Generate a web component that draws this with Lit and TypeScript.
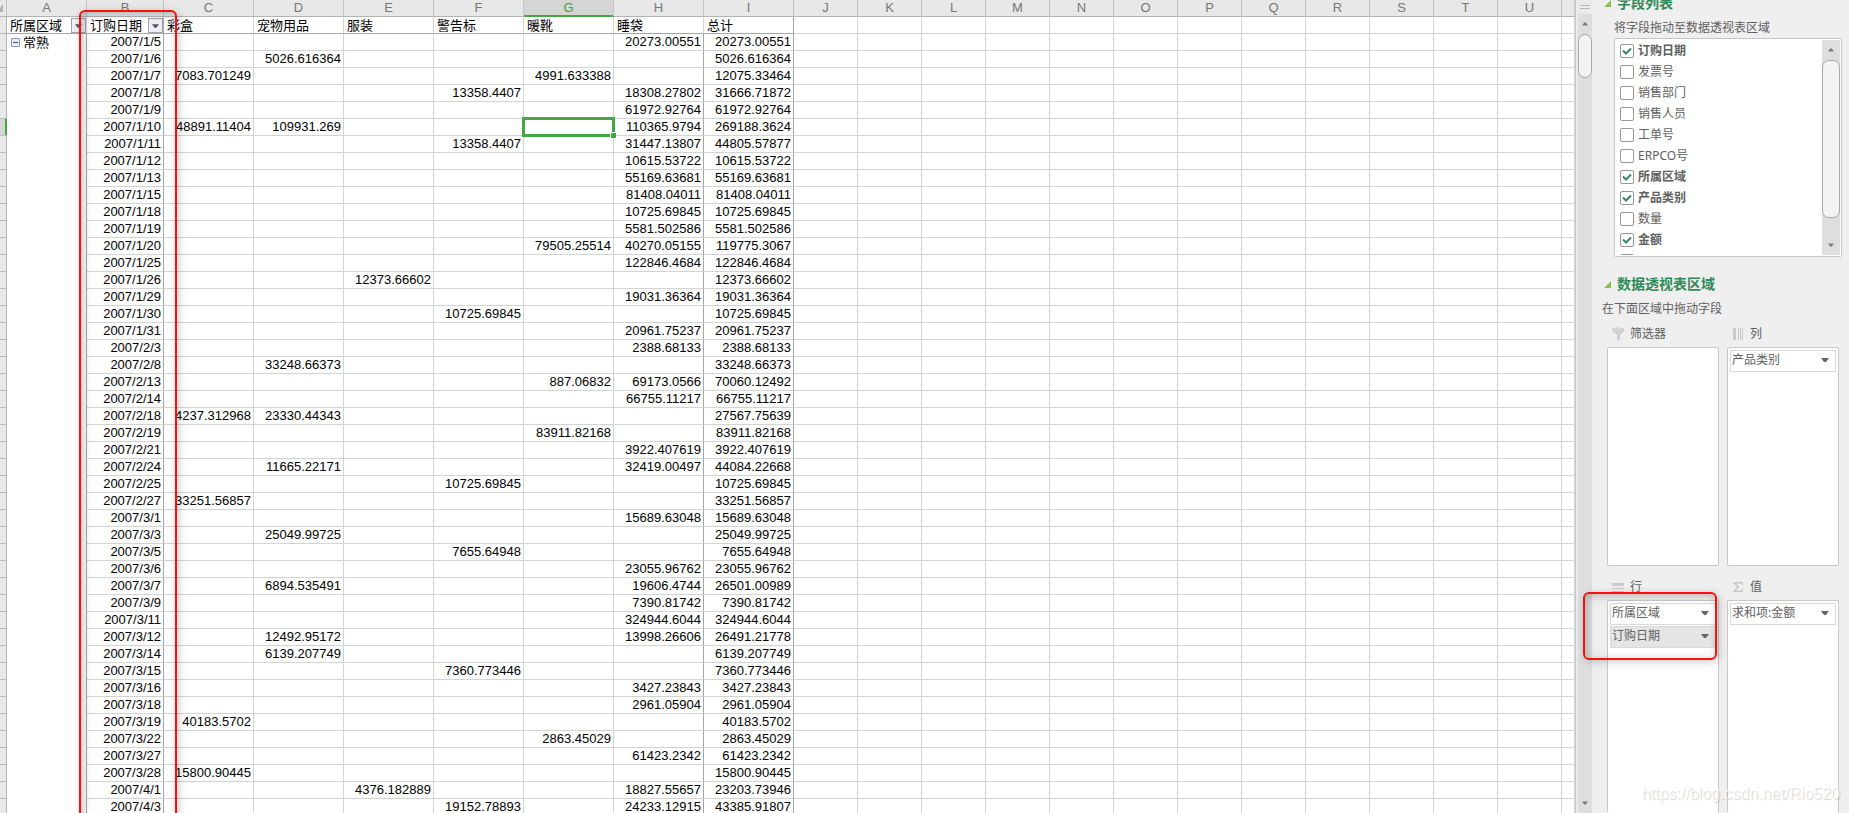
import { LitElement, html, css, svg, nothing } from "lit";
import { customElement } from "lit/decorators.js";
import { classMap } from "lit/directives/class-map.js";

type Values = { C?: string; D?: string; E?: string; F?: string; G?: string; H?: string };
type Row = [string, Values, string];

const ROWS: Row[] = [
  ["2007/1/5", { H: "20273.00551" }, "20273.00551"],
  ["2007/1/6", { D: "5026.616364" }, "5026.616364"],
  ["2007/1/7", { C: "7083.701249", G: "4991.633388" }, "12075.33464"],
  ["2007/1/8", { F: "13358.4407", H: "18308.27802" }, "31666.71872"],
  ["2007/1/9", { H: "61972.92764" }, "61972.92764"],
  ["2007/1/10", { C: "48891.11404", D: "109931.269", H: "110365.9794" }, "269188.3624"],
  ["2007/1/11", { F: "13358.4407", H: "31447.13807" }, "44805.57877"],
  ["2007/1/12", { H: "10615.53722" }, "10615.53722"],
  ["2007/1/13", { H: "55169.63681" }, "55169.63681"],
  ["2007/1/15", { H: "81408.04011" }, "81408.04011"],
  ["2007/1/18", { H: "10725.69845" }, "10725.69845"],
  ["2007/1/19", { H: "5581.502586" }, "5581.502586"],
  ["2007/1/20", { G: "79505.25514", H: "40270.05155" }, "119775.3067"],
  ["2007/1/25", { H: "122846.4684" }, "122846.4684"],
  ["2007/1/26", { E: "12373.66602" }, "12373.66602"],
  ["2007/1/29", { H: "19031.36364" }, "19031.36364"],
  ["2007/1/30", { F: "10725.69845" }, "10725.69845"],
  ["2007/1/31", { H: "20961.75237" }, "20961.75237"],
  ["2007/2/3", { H: "2388.68133" }, "2388.68133"],
  ["2007/2/8", { D: "33248.66373" }, "33248.66373"],
  ["2007/2/13", { G: "887.06832", H: "69173.0566" }, "70060.12492"],
  ["2007/2/14", { H: "66755.11217" }, "66755.11217"],
  ["2007/2/18", { C: "4237.312968", D: "23330.44343" }, "27567.75639"],
  ["2007/2/19", { G: "83911.82168" }, "83911.82168"],
  ["2007/2/21", { H: "3922.407619" }, "3922.407619"],
  ["2007/2/24", { D: "11665.22171", H: "32419.00497" }, "44084.22668"],
  ["2007/2/25", { F: "10725.69845" }, "10725.69845"],
  ["2007/2/27", { C: "33251.56857" }, "33251.56857"],
  ["2007/3/1", { H: "15689.63048" }, "15689.63048"],
  ["2007/3/3", { D: "25049.99725" }, "25049.99725"],
  ["2007/3/5", { F: "7655.64948" }, "7655.64948"],
  ["2007/3/6", { H: "23055.96762" }, "23055.96762"],
  ["2007/3/7", { D: "6894.535491", H: "19606.4744" }, "26501.00989"],
  ["2007/3/9", { H: "7390.81742" }, "7390.81742"],
  ["2007/3/11", { H: "324944.6044" }, "324944.6044"],
  ["2007/3/12", { D: "12492.95172", H: "13998.26606" }, "26491.21778"],
  ["2007/3/14", { D: "6139.207749" }, "6139.207749"],
  ["2007/3/15", { F: "7360.773446" }, "7360.773446"],
  ["2007/3/16", { H: "3427.23843" }, "3427.23843"],
  ["2007/3/18", { H: "2961.05904" }, "2961.05904"],
  ["2007/3/19", { C: "40183.5702" }, "40183.5702"],
  ["2007/3/22", { G: "2863.45029" }, "2863.45029"],
  ["2007/3/27", { H: "61423.2342" }, "61423.2342"],
  ["2007/3/28", { C: "15800.90445" }, "15800.90445"],
  ["2007/4/1", { E: "4376.182889", H: "18827.55657" }, "23203.73946"],
  ["2007/4/3", { F: "19152.78893", H: "24233.12915" }, "43385.91807"],
];

const CATEGORY_COLS = ["C", "D", "E", "F", "G", "H"] as const;
const CATEGORIES = ["彩盒", "宠物用品", "服装", "警告标", "暖靴", "睡袋"];
const EMPTY_COLS = [..."JKLMNOPQRSTU", ""];
const SELECTED = { row: "2007/1/10", col: "G" };

const FIELDS: [string, boolean][] = [
  ["订购日期", true],
  ["发票号", false],
  ["销售部门", false],
  ["销售人员", false],
  ["工单号", false],
  ["ERPCO号", false],
  ["所属区域", true],
  ["产品类别", true],
  ["数量", false],
  ["金额", true],
  ["", false],
];

const arrow = (cls: string, up = false) => html`<svg class=${cls} viewBox="0 0 8 4" aria-hidden="true">
  ${up ? svg`<path d="M0 4 L3 0 H5 L8 4Z" />` : svg`<path d="M0 0 H8 L5 4 H3Z" />`}
</svg>`;

@customElement("pivot-sheet")
export class PivotSheet extends LitElement {
  static styles = css`
    :host {
      display: block;
      overflow: hidden;
      background: #fff;
    }
    .grid {
      width: 100%;
      table-layout: fixed;
      border-collapse: separate;
      border-spacing: 0;
      font: 13px/16px "Liberation Sans", "Noto Sans CJK SC", sans-serif;
      color: #000;
    }
    .w-row { width: 7px; }
    .w-a { width: 80px; }
    .w-b { width: 77px; }
    .w-value { width: 90px; }
    .w-empty { width: 64px; }
    th, td {
      box-sizing: border-box;
      height: 17px;
      padding: 0 2px;
      border-right: 1px solid #d4d4d4;
      border-bottom: 1px solid #d4d4d4;
      font-weight: 400;
      text-align: right;
      white-space: nowrap;
    }
    .letter, .corner {
      padding: 0;
      text-align: center;
      color: #777;
      background: #e8e8e8;
      border-right-color: #c4c4c4;
      border-bottom-color: #b4b4b4;
    }
    .letter.active {
      color: #3fa33f;
      background: #d5d5d5;
      box-shadow: inset 0 -1px #43a843;
      border-bottom-color: #43a843;
    }
    .corner-mark {
      display: block;
      width: 4px;
      height: 8px;
      fill: #b4b4b4;
    }
    .row-head {
      padding: 0;
      background: #e8e8e8;
      border-right-color: #b4b4b4;
      border-bottom-color: #bcbcbc;
    }
    .row-head.active {
      background: #d5d5d5;
      box-shadow: inset -1px 0 #43a843;
      border-right-color: #43a843;
    }
    .title {
      padding: 2px 3px 0;
      line-height: 14px;
      text-align: left;
      border-bottom-color: #a6a6a6;
    }
    .title.blank { border-bottom-color: #d4d4d4; }
    .with-filter {
      display: flex;
      align-items: flex-start;
      justify-content: space-between;
    }
    .filter {
      display: grid;
      place-items: center;
      box-sizing: border-box;
      width: 15px;
      height: 15px;
      margin: -1px -3px 0 0;
      padding: 0;
      border: 1px solid #a3a3ad;
      background: #eeeff4;
    }
    .filter-arrow {
      width: 7px;
      height: 4px;
      fill: #55555c;
    }
    .region {
      padding: 1px 4px 0;
      vertical-align: top;
      border-bottom: 0;
    }
    .group {
      display: flex;
      align-items: center;
      gap: 3px;
    }
    .toggle {
      display: grid;
      place-items: center;
      box-sizing: border-box;
      width: 9px;
      height: 9px;
      margin: 0 0 2px;
      padding: 0;
      border: 1px solid #8796b0;
      border-radius: 1px;
      background: #e9edf5;
    }
    .minus {
      width: 5px;
      height: 1px;
      background: #35507c;
    }
    .edge { border-right-color: #a6a6a6; }
    .selected { position: relative; }
    .cursor {
      position: absolute;
      inset: -2px;
      border: 3px solid #43a843;
    }
    .handle {
      position: absolute;
      right: -4px;
      bottom: -4px;
      width: 5px;
      height: 5px;
      border: 1px solid #fff;
      border-right: 0;
      border-bottom: 0;
      background: #43a843;
    }
  `;

  private filter(label: string) {
    return html`<button class="filter" aria-label=${`筛选 ${label}`}>${arrow("filter-arrow")}</button>`;
  }

  render() {
    return html`
      <table class="grid">
        <colgroup>
          <col class="w-row" /><col class="w-a" /><col class="w-b" />
          ${[...CATEGORY_COLS, "I"].map(() => html`<col class="w-value" />`)}
          ${EMPTY_COLS.map((c) => html`<col class=${c ? "w-empty" : ""} />`)}
        </colgroup>
        <thead>
          <tr>
            <th class="corner"><svg class="corner-mark" viewBox="0 0 4 8" aria-hidden="true"><path d="M3 0V8H0V4Z" /></svg></th>
            ${["A", "B", ...CATEGORY_COLS, "I", ...EMPTY_COLS].map(
              (c) => html`<th class=${classMap({ letter: true, active: c === SELECTED.col })}>${c}</th>`
            )}
          </tr>
          <tr>
            <th class="row-head"></th>
            <th class="title"><div class="with-filter">所属区域${this.filter("所属区域")}</div></th>
            <th class="title edge"><div class="with-filter">订购日期${this.filter("订购日期")}</div></th>
            ${CATEGORIES.map((c) => html`<th class="title">${c}</th>`)}
            <th class="title edge">总计</th>
            ${EMPTY_COLS.map(() => html`<th class="title blank"></th>`)}
          </tr>
        </thead>
        <tbody>
          ${ROWS.map(([date, values, total], i) => html`
            <tr>
              <th class=${classMap({ "row-head": true, active: date === SELECTED.row })}></th>
              ${i === 0
                ? html`<td class="region edge" rowspan=${ROWS.length}>
                    <div class="group"><button class="toggle" aria-label="折叠 常熟"><span class="minus"></span></button>常熟</div>
                  </td>`
                : nothing}
              <td class="edge">${date}</td>
              ${CATEGORY_COLS.map((c) => {
                const selected = date === SELECTED.row && c === SELECTED.col;
                return html`<td class=${classMap({ edge: c === "H", selected })}>${values[c] ?? nothing}${selected
                  ? html`<div class="cursor"><div class="handle"></div></div>`
                  : nothing}</td>`;
              })}
              <td class="edge">${total}</td>
              ${EMPTY_COLS.map(() => html`<td></td>`)}
            </tr>
          `)}
        </tbody>
      </table>
    `;
  }
}

@customElement("scroll-track")
export class ScrollTrack extends LitElement {
  static styles = css`
    :host {
      display: flex;
      flex-direction: column;
      align-items: stretch;
      background: #dedede;
    }
    .step {
      display: grid;
      place-items: center;
      height: 20px;
      flex: none;
      padding: 0;
      border: 0;
      background: none;
    }
    .step-arrow {
      width: 6px;
      height: 4px;
      fill: #7a7a7a;
    }
    .thumb {
      box-sizing: border-box;
      height: var(--thumb, 44px);
      border: 1px solid #a9a9a9;
      border-radius: 7px;
      background: #f3f3f3;
    }
    .rest { flex: 1; }
  `;

  render() {
    return html`
      <button class="step" aria-label="向上滚动">${arrow("step-arrow", true)}</button>
      <div class="thumb"></div>
      <div class="rest"></div>
      <button class="step" aria-label="向下滚动">${arrow("step-arrow")}</button>
    `;
  }
}

const filterIcon = svg`<path d="M0 2C0 0 12 0 12 2V4L8 8V13L6 14L5 13V8L0 4Z" fill="#cfcfcf" /><path d="M2 3Q6 1 10 3" fill="none" stroke="#e6e6e6" />`;
const columnsIcon = svg`<path d="M1 1H4V13H1ZM6 1H7V13H6ZM8 1H9V13H8ZM10 1H11V13H10Z" fill="#cbcbcb" />`;
const rowsIcon = svg`<path d="M0 3H12V6H0ZM0 8H12V9H0ZM0 11H12V12H0Z" fill="#cbcbcb" />`;
const sumIcon = svg`<path d="M1 2H11V5H10L9 3.5H4L7.500 7L4 10.500H9L10 9H11V12H1V11L5 7L1 3Z" fill="#cbcbcb" />`;

@customElement("pivot-panel")
export class PivotPanel extends LitElement {
  static styles = css`
    :host {
      display: flex;
      flex-direction: column;
      box-sizing: border-box;
      overflow: hidden;
      background: #efefef;
      color: #606060;
      font: 12px/16px "Noto Sans", "Noto Sans CJK SC", sans-serif;
    }
    .heading {
      display: flex;
      align-items: center;
      gap: 6px;
      flex: none;
      height: 16px;
      margin: 0;
      padding-left: 12px;
      font-size: 14px;
      font-weight: 700;
      color: #2f8a59;
    }
    .heading.first { margin-top: -5px; }
    .heading.second { margin-top: 19px; }
    .mark {
      width: 7px;
      height: 7px;
      fill: #8cc152;
    }
    .hint {
      margin: 0;
      flex: none;
    }
    .hint.first { padding: 9px 0 2px 22px; }
    .hint.second { padding: 9px 0 0 10px; }
    .fields {
      display: flex;
      flex: none;
      box-sizing: border-box;
      height: 219px;
      margin: 0 7px 0 22px;
      padding: 1px;
      border: 1px solid #c6c6c6;
      border-radius: 2px;
      background: #fff;
      overflow: hidden;
    }
    .list {
      flex: 1;
      margin: 0;
      padding: 0 4px;
      list-style: none;
      overflow: hidden;
    }
    .field {
      display: flex;
      align-items: center;
      gap: 4px;
      height: 21px;
    }
    .field.on { font-weight: 700; }
    .box {
      display: grid;
      flex: none;
    }
    .check {
      appearance: none;
      grid-area: 1 / 1;
      box-sizing: border-box;
      width: 14px;
      height: 14px;
      margin: 0;
      border: 1px solid #969696;
      border-radius: 2px;
      background: #fff;
    }
    .tick {
      grid-area: 1 / 1;
      z-index: 1;
      width: 14px;
      height: 14px;
      fill: none;
      stroke: #3d8560;
      stroke-width: 2;
      pointer-events: none;
    }
    .list-scroll {
      width: 18px;
      --thumb: 158px;
    }
    .areas {
      display: grid;
      grid-template-columns: 1fr 1fr;
      grid-template-rows: 253px 1fr;
      column-gap: 8px;
      flex: 1;
      min-height: 0;
      padding: 0 10px 0 15px;
    }
    .area {
      display: flex;
      flex-direction: column;
      min-width: 0;
    }
    .area-title {
      display: flex;
      align-items: center;
      gap: 6px;
      height: 16px;
      padding: 9px 0 5px 5px;
    }
    .area-icon {
      width: 12px;
      height: 14px;
    }
    .drop {
      display: flex;
      flex: 1;
      flex-direction: column;
      gap: 1px;
      box-sizing: border-box;
      padding: 2px;
      border: 1px solid #c8c8c8;
      border-radius: 2px;
      background: #fff;
    }
    .area.top .drop {
      flex: none;
      height: 219px;
    }
    .area.low .drop { border-bottom: 0; }
    .chip {
      position: relative;
      display: grid;
    }
    .chip-select {
      appearance: none;
      box-sizing: border-box;
      height: 22px;
      width: 100%;
      margin: 0;
      padding: 0 20px 2px 1px;
      border: 1px solid #d9d9d9;
      border-radius: 0;
      background: #fff;
      color: inherit;
      font: inherit;
    }
    .chip-select.on { background: #e5e5e5; }
    .chip-arrow {
      position: absolute;
      top: 8px;
      right: 7px;
      width: 8px;
      height: 4px;
      fill: #666;
      pointer-events: none;
    }
  `;

  private heading(text: string, cls: string) {
    return html`<h2 class="heading ${cls}">
      <svg class="mark" viewBox="0 0 7 7" aria-hidden="true"><path d="M7 0V7H0Z" /></svg>${text}
    </h2>`;
  }

  private area(title: string, icon: unknown, pos: string, items: string[], active = "") {
    return html`<section class="area ${pos}">
      <div class="area-title"><svg class="area-icon" viewBox="0 0 12 14" aria-hidden="true">${icon}</svg>${title}</div>
      <div class="drop">
        ${items.map((item) => html`<div class="chip">
          <select class=${classMap({ "chip-select": true, on: item === active })} aria-label=${title}><option>${item}</option></select>
          ${arrow("chip-arrow")}
        </div>`)}
      </div>
    </section>`;
  }

  render() {
    return html`
      ${this.heading("字段列表", "first")}
      <p class="hint first">将字段拖动至数据透视表区域</p>
      <div class="fields">
        <ul class="list">
          ${FIELDS.map(([name, on]) => html`<li>
            <label class=${classMap({ field: true, on })}>
              <span class="box">
                <input class="check" type="checkbox" .checked=${on} />
                ${on ? html`<svg class="tick" viewBox="0 0 14 14" aria-hidden="true"><path d="M3 6.500L6 9.500L11 4.500" /></svg>` : nothing}
              </span>${name}
            </label>
          </li>`)}
        </ul>
        <scroll-track class="list-scroll"></scroll-track>
      </div>
      ${this.heading("数据透视表区域", "second")}
      <p class="hint second">在下面区域中拖动字段</p>
      <div class="areas">
        ${this.area("筛选器", filterIcon, "top", [])}
        ${this.area("列", columnsIcon, "top", ["产品类别"])}
        ${this.area("行", rowsIcon, "low", ["所属区域", "订购日期"], "订购日期")}
        ${this.area("值", sumIcon, "low", ["求和项:金额"])}
      </div>
    `;
  }
}

@customElement("app-root")
export class AppRoot extends LitElement {
  static styles = css`
    :host {
      position: relative;
      display: flex;
      height: 100vh;
      overflow: hidden;
      background: #efefef;
    }
    .sheet {
      flex: 1;
      min-width: 0;
    }
    .gutter {
      display: flex;
      flex-direction: column;
      flex: none;
      width: 14px;
      padding-left: 2px;
      border-left: 1px solid #c8c8c8;
      background: #ebebeb;
    }
    .split {
      display: grid;
      align-content: center;
      justify-content: center;
      gap: 2px;
      flex: none;
      height: 14px;
    }
    .split-line {
      width: 10px;
      height: 1px;
      background: #b5b5b5;
    }
    .track { flex: 1; }
    .panel {
      flex: none;
      width: 257px;
    }
    .note {
      position: absolute;
      box-sizing: border-box;
      border: 2px solid #fb0f0c;
      border-radius: 6px;
      box-shadow: 2px 2px 8px rgba(0, 0, 0, 0.2), inset 2px 2px 8px rgba(0, 0, 0, 0.25);
      pointer-events: none;
    }
    .note-dates {
      left: 79px;
      top: 10px;
      bottom: -8px;
      width: 98px;
    }
    .note-rows {
      right: 132px;
      top: 592px;
      width: 134px;
      height: 68px;
    }
    .watermark {
      position: absolute;
      right: 9px;
      bottom: 9px;
      font: 16px/20px "Liberation Sans", sans-serif;
      color: rgba(255, 255, 255, 0.7);
      text-shadow: 1px 1px 1px rgba(0, 0, 0, 0.16);
      pointer-events: none;
    }
  `;

  render() {
    return html`
      <pivot-sheet class="sheet"></pivot-sheet>
      <div class="gutter">
        <div class="split"><span class="split-line"></span><span class="split-line"></span></div>
        <scroll-track class="track"></scroll-track>
      </div>
      <pivot-panel class="panel"></pivot-panel>
      <div class="note note-dates"></div>
      <div class="note note-rows"></div>
      <div class="watermark">https://blog.csdn.net/Rio520</div>
    `;
  }
}
